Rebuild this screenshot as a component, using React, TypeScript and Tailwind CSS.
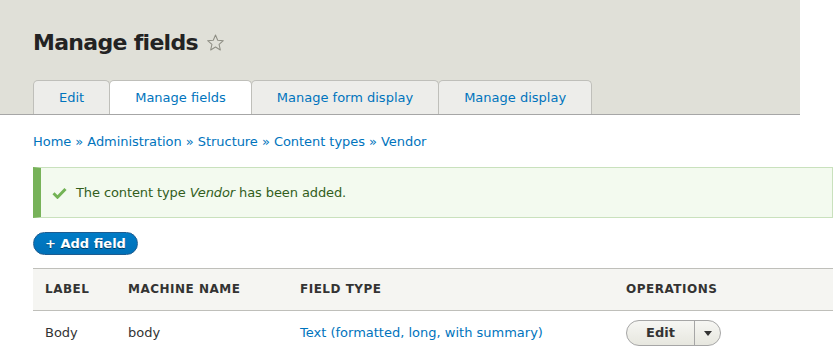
import React from 'react';

const tabs = [
  { label: 'Edit', active: false },
  { label: 'Manage fields', active: true },
  { label: 'Manage form display', active: false },
  { label: 'Manage display', active: false },
];

const crumbs = ['Home', 'Administration', 'Structure', 'Content types', 'Vendor'];

function Star() {
  return (
    <svg width="19" height="19" viewBox="0 0 24 24" className="ml-[8px] mt-[5px]">
      <path
        d="M12 2.5l2.8 6.6 7.1.6-5.4 4.7 1.6 7-6.1-3.7-6.1 3.7 1.6-7-5.4-4.7 7.1-.6z"
        fill="none"
        stroke="#8e8e84"
        strokeWidth="1.3"
        strokeLinejoin="round"
      />
    </svg>
  );
}

function Check() {
  return (
    <svg width="15" height="12" viewBox="0 0 15 12">
      <path d="M1.5 6.2l4 4 8-8.2" fill="none" stroke="#73b355" strokeWidth="3" />
    </svg>
  );
}

export default function App() {
  return (
    <div className="h-[357px] w-[833px] overflow-hidden bg-white font-['DejaVu_Sans',sans-serif] text-[13px] text-[#333]">
      <div className="w-[800px] border-b border-[#a6a6a6] bg-[#e0e0d8] pl-[33px]">
        <h1 className="flex items-start pt-[28px] text-[22px] font-bold leading-[30px] tracking-[-0.7px] text-[#232323]">
          Manage fields
          <Star />
        </h1>
        <ul className="mt-[22px] flex">
          {tabs.map((t) => (
            <li
              key={t.label}
              className={`-ml-px flex h-[34px] items-center rounded-t-[5px] border border-b-0 border-[#bfbfba] px-[25px] text-[#0074bd] first:ml-0 ${
                t.active ? 'bg-white' : 'bg-[#ededea]'
              }`}
            >
              {t.label}
            </li>
          ))}
        </ul>
      </div>

      <div className="pl-[33px]">
        <nav className="mt-[17px] leading-[20px] tracking-[-0.05px] text-[#0074bd]">
          {crumbs.map((c, i) => (
            <React.Fragment key={c}>
              <span>{c}</span>
              {i < crumbs.length - 1 && ' » '}
            </React.Fragment>
          ))}
        </nav>

        <div className="mt-[15px] flex h-[51px] items-center border border-l-[8px] border-[#c9e1bd] border-l-[#77b259] bg-[#f3faef] pl-[11px] text-[#325e1c]">
          <Check />
          <span className="ml-[9px] tracking-[-0.1px]">
            The content type <em>Vendor</em> has been added.
          </span>
        </div>

        <button className="mt-[14px] flex h-[23px] w-[105px] items-center justify-center rounded-full border border-[#1e5c90] bg-gradient-to-b from-[#007bc6] to-[#0071b8] font-bold leading-none text-white [text-shadow:0_1px_rgba(0,0,0,0.5)]">
          + Add field
        </button>

        <table className="mt-[13px] w-[800px] border-collapse">
          <thead>
            <tr className="h-[42px] border-y border-[#bfbfba] bg-[#f5f5f2] text-left text-[12px] font-bold uppercase tracking-[0.5px] text-[#333]">
              <th className="w-[83px] pl-[12px] pb-[2px]">Label</th>
              <th className="w-[172px] pl-[12px] pb-[2px]">Machine name</th>
              <th className="w-[326px] pl-[12px] pb-[2px]">Field type</th>
              <th className="pl-[12px] pb-[2px]">Operations</th>
            </tr>
          </thead>
          <tbody>
            <tr className="h-[47px] border-b border-[#e6e4df]">
              <td className="pl-[12px] pb-[2px]">Body</td>
              <td className="pl-[12px] pb-[2px]">body</td>
              <td className="pl-[12px] pb-[2px] text-[#0074bd]">Text (formatted, long, with summary)</td>
              <td className="pl-[12px] pb-[2px]">
                <div className="flex h-[26px] w-[95px] overflow-hidden rounded-full border border-[#a6a6a6] bg-gradient-to-b from-[#f6f6f3] to-[#e7e7df]">
                  <span className="flex w-[68px] items-center justify-center border-r border-[#a6a6a6] font-bold text-[#333]">
                    Edit
                  </span>
                  <span className="flex flex-1 items-center justify-center">
                    <svg width="8" height="5" viewBox="0 0 8 5">
                      <path d="M0 0h8L4 5z" fill="#333" />
                    </svg>
                  </span>
                </div>
              </td>
            </tr>
          </tbody>
        </table>
      </div>
    </div>
  );
}
